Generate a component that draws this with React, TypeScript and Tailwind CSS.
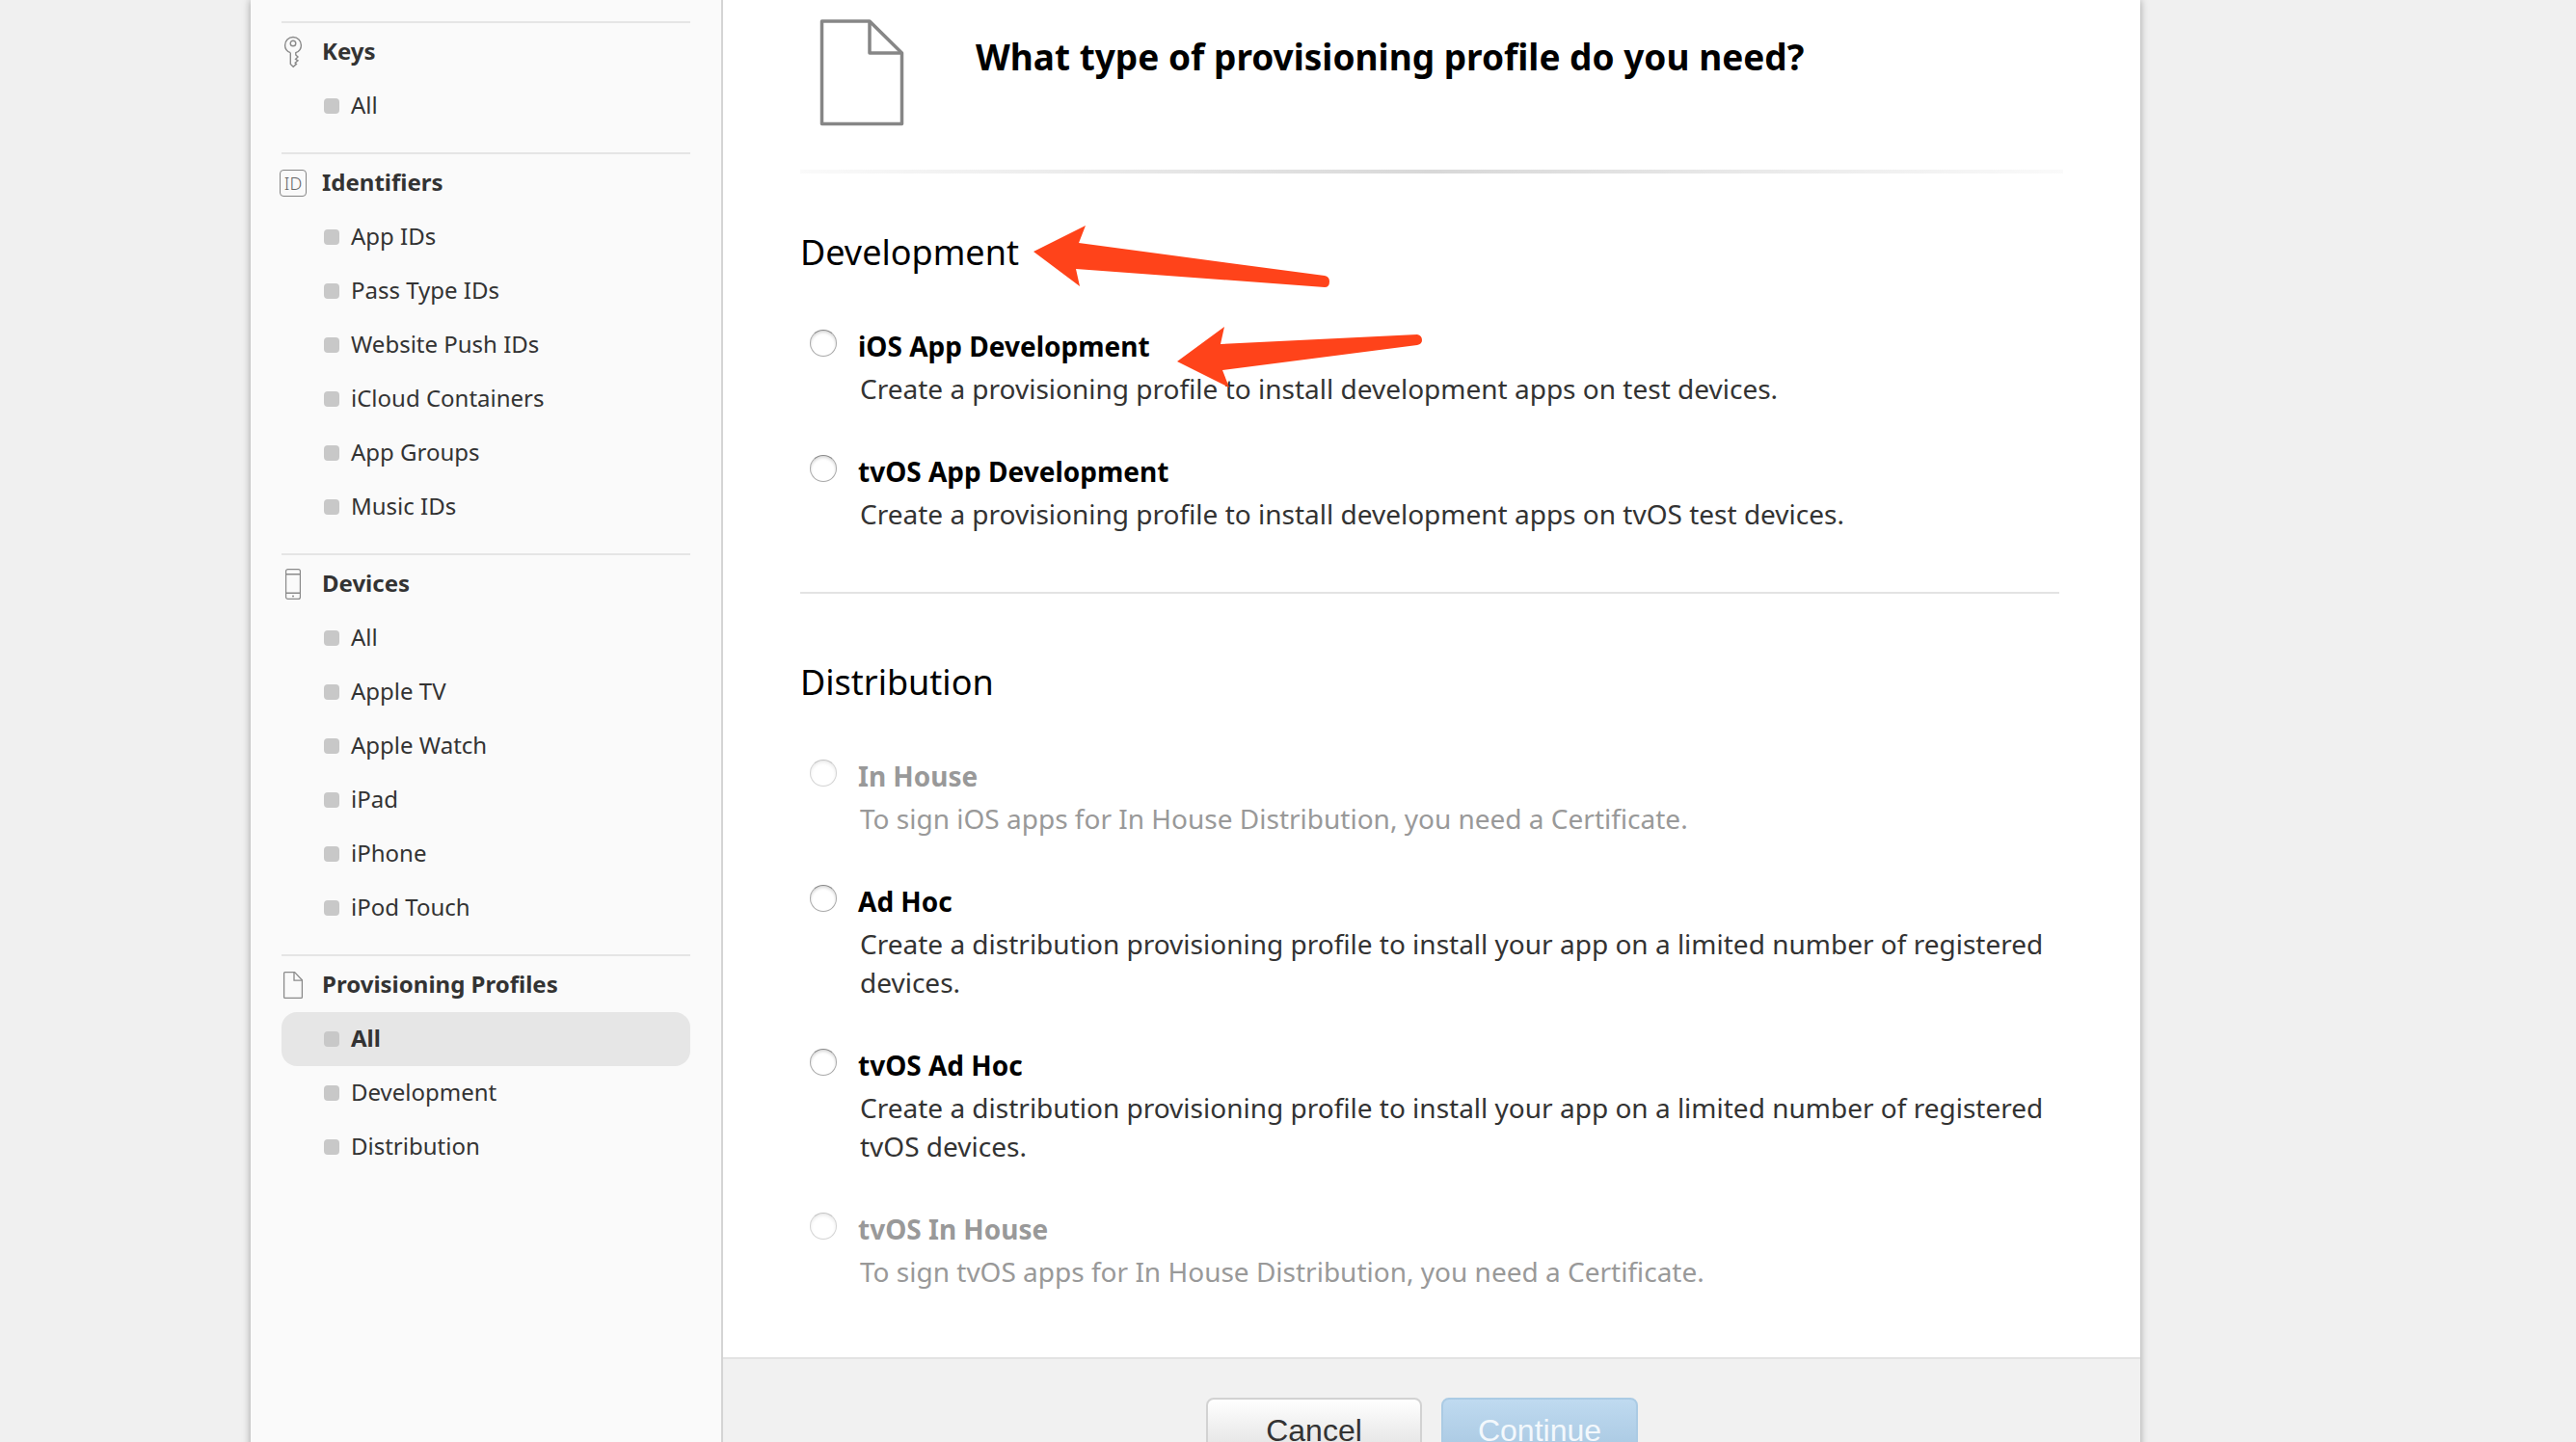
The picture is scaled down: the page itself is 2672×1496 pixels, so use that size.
import React from "react";

type NavSection = {
  title: string;
  icon: React.ReactNode;
  items: string[];
  selected?: string;
};

function KeyIcon() {
  return (
    <svg width="20" height="34" viewBox="0 0 20 34" fill="none" stroke="#8a8a8a" strokeWidth="1.4" aria-hidden="true">
      <circle cx="10" cy="8" r="2.8" />
      <path d="M7.300 17.700V29.500L10.200 32.300L13.500 29.400L12.200 28.200L15 25.800L12.600 24.300L15 22L12.800 20V17.700C16.400 16.400 18.400 13.500 18.400 10C18.400 5.300 14.800 1.500 10 1.500C5.200 1.500 1.600 5.300 1.600 10C1.600 13.500 3.600 16.400 7.300 17.700" />
    </svg>
  );
}

function IdIcon() {
  return (
    <span
      aria-hidden="true"
      className="flex h-7 w-7 items-center justify-center rounded border border-[#858585] text-lg leading-none font-light text-[#666]"
    >
      ID
    </span>
  );
}

function PhoneIcon() {
  return (
    <svg width="18" height="34" viewBox="0 0 18 34" fill="none" stroke="#8a8a8a" strokeWidth="1.2" aria-hidden="true">
      <rect x="1.600" y="1.600" width="14.800" height="30.800" rx="2" />
      <path d="M1.600 6.800H16.400M1.600 26.300H16.400" strokeWidth="1.500" />
      <circle cx="9" cy="29.400" r="1" fill="#8a8a8a" stroke="none" />
    </svg>
  );
}

function ProfileIcon() {
  return (
    <svg width="22" height="30" viewBox="0 0 22 30" fill="none" stroke="#8a8a8a" strokeWidth="1.300" aria-hidden="true">
      <path d="M2.600 1.600H12.600L20.400 9.700V27.400Q20.400 28.400 19.400 28.400H2.600Q1.600 28.400 1.600 27.400V2.600Q1.600 1.600 2.600 1.600Z" />
      <path d="M12 2V10.200H20.200" />
    </svg>
  );
}

const sections: NavSection[] = [
  { title: "Keys", icon: <KeyIcon />, items: ["All"] },
  {
    title: "Identifiers",
    icon: <IdIcon />,
    items: ["App IDs", "Pass Type IDs", "Website Push IDs", "iCloud Containers", "App Groups", "Music IDs"],
  },
  {
    title: "Devices",
    icon: <PhoneIcon />,
    items: ["All", "Apple TV", "Apple Watch", "iPad", "iPhone", "iPod Touch"],
  },
  {
    title: "Provisioning Profiles",
    icon: <ProfileIcon />,
    items: ["All", "Development", "Distribution"],
    selected: "All",
  },
];

function Sidebar() {
  return (
    <nav className="w-[490px] shrink-0 border-r-2 border-[#d4d4d4] bg-[#fafafa] pt-[22px] pr-8 pl-8 text-2xl text-[#333]">
      {sections.map((s) => (
        <section key={s.title} className="border-t-2 border-[#e5e5e5] pt-0.5 pb-5">
          <h2 className="flex h-14 items-center font-bold">
            <span className="-ml-1 flex w-8 shrink-0 justify-center">{s.icon}</span>
            <span className="ml-3.5 pb-0.5">{s.title}</span>
          </h2>
          <ul>
            {s.items.map((item) => (
              <li key={item}>
                <a
                  href="#"
                  className={
                    item === s.selected
                      ? "flex h-14 items-center gap-3 rounded-2xl bg-[#e6e6e6] pl-11 font-bold"
                      : "flex h-14 items-center gap-3 pl-11"
                  }
                >
                  <span className="h-4 w-4 rounded bg-[#c8c8c8]" />
                  <span className="pb-0.5">{item}</span>
                </a>
              </li>
            ))}
          </ul>
        </section>
      ))}
    </nav>
  );
}

type Option = { id: string; title: string; text: string; disabled?: boolean };

const development: Option[] = [
  {
    id: "ios-dev",
    title: "iOS App Development",
    text: "Create a provisioning profile to install development apps on test devices.",
  },
  {
    id: "tvos-dev",
    title: "tvOS App Development",
    text: "Create a provisioning profile to install development apps on tvOS test devices.",
  },
];

const distribution: Option[] = [
  {
    id: "in-house",
    title: "In House",
    text: "To sign iOS apps for In House Distribution, you need a Certificate.",
    disabled: true,
  },
  {
    id: "ad-hoc",
    title: "Ad Hoc",
    text: "Create a distribution provisioning profile to install your app on a limited number of registered devices.",
  },
  {
    id: "tvos-ad-hoc",
    title: "tvOS Ad Hoc",
    text: "Create a distribution provisioning profile to install your app on a limited number of registered tvOS devices.",
  },
  {
    id: "tvos-in-house",
    title: "tvOS In House",
    text: "To sign tvOS apps for In House Distribution, you need a Certificate.",
    disabled: true,
  },
];

function OptionRow({ option }: { option: Option }) {
  return (
    <div className={option.disabled ? "flex items-start pl-2.5 text-[#999]" : "flex items-start pl-2.5 text-[#333]"}>
      <input
        type="radio"
        name="profile-type"
        id={option.id}
        disabled={option.disabled}
        aria-describedby={option.id + "-text"}
        className="mt-1 h-7 w-7 shrink-0 appearance-none rounded-full border border-[#aaa] border-t-[#888] bg-white shadow-[inset_0_2px_3px_rgba(0,0,0,0.15)] checked:bg-[#4a90d9] disabled:opacity-50"
      />
      <div className="ml-[22px] flex-1 pt-px leading-10">
        <label htmlFor={option.id} className={option.disabled ? "block font-bold" : "block font-bold text-black"}>
          {option.title}
        </label>
        <p id={option.id + "-text"} className="mt-1 ml-0.5">
          {option.text}
        </p>
      </div>
    </div>
  );
}

function OptionGroup({ title, options, children }: { title: string; options: Option[]; children?: React.ReactNode }) {
  return (
    <fieldset>
      <legend className="text-4xl leading-12 text-black">{title}</legend>
      <div className="relative mt-[52px] flex flex-col gap-[45px]">
        {options.map((o) => (
          <OptionRow key={o.id} option={o} />
        ))}
        {children}
      </div>
    </fieldset>
  );
}

function Arrows() {
  return (
    <svg
      className="pointer-events-none absolute -top-26 left-60"
      width="410"
      height="172"
      viewBox="1070 234 410 172"
      fill="#ff431a"
      aria-hidden="true"
    >
      <path d="M1072 261L1126 234L1119 252L1374 286Q1379 287 1379 292Q1379 298 1374 298L1116 279L1120 297Z" />
      <path d="M1221 375L1270 339L1266 357L1470 347Q1475 348 1475 353Q1475 357 1470 358L1268 384L1275 402Z" />
    </svg>
  );
}

export default function App() {
  return (
    <div className="h-screen overflow-hidden bg-[#f0f0f0] pr-[452px] pl-[260px] font-['Noto_Sans',sans-serif]">
      <div className="flex min-h-full items-stretch bg-white shadow-[0_0_8px_rgba(0,0,0,0.35)]">
        <Sidebar />
        <main className="flex min-w-0 flex-1 flex-col">
          <div className="px-20 text-[28px]">
            <header className="flex h-44 items-start">
              <svg
                className="mt-[18px] ml-[18px] shrink-0"
                width="92"
                height="116"
                viewBox="0 0 92 116"
                fill="none"
                stroke="#868686"
                strokeWidth="3.500"
                strokeLinejoin="round"
                aria-hidden="true"
              >
                <path d="M4.500 4H54L87.500 37V110.500H4.500Z" />
                <path d="M54 4V37H87" />
              </svg>
              <h1 className="mt-8 ml-[72px] text-[37px] leading-[54px] font-bold text-black">
                What type of provisioning profile do you need?
              </h1>
            </header>
            <div className="h-1 bg-linear-to-r from-[#fafafa] via-[#d8d8d8] to-[#fafafa]" />
            <div className="pt-[58px]">
              <OptionGroup title="Development" options={development}>
                <Arrows />
              </OptionGroup>
            </div>
            <hr className="mt-[61px] mr-1 border-t-2 border-[#e3e3e3]" />
            <div className="pt-[68px] pb-[69px]">
              <OptionGroup title="Distribution" options={distribution} />
            </div>
          </div>
          <footer className="flex justify-center gap-5 border-t-2 border-[#e3e3e3] bg-[#f1f1f1] py-10 pr-5 font-['Liberation_Sans',sans-serif] text-[32px] leading-none">
            <button
              type="button"
              className="h-[66px] w-56 rounded-lg border-2 border-[#d2d2d2] bg-linear-to-b from-white to-[#dedede] pt-0.5 text-[#333]"
            >
              Cancel
            </button>
            <button
              type="button"
              disabled
              className="h-[66px] w-51 rounded-lg border-2 border-[#abcbe4] bg-linear-to-b from-[#bfdaf0] to-[#a6c6e0] pt-0.5 text-[#f3f8fc]"
            >
              Continue
            </button>
          </footer>
        </main>
      </div>
    </div>
  );
}
